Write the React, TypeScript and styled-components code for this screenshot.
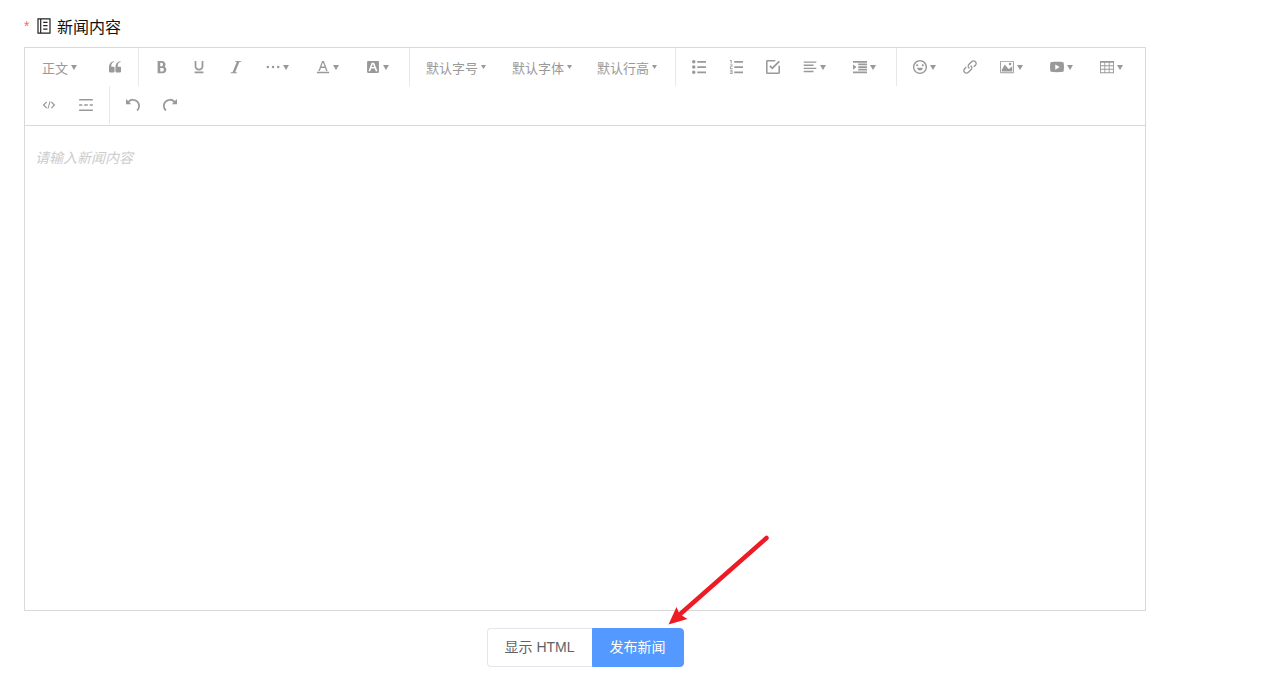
import React from "react";
import styled, { createGlobalStyle } from "styled-components";

const GlobalStyle = createGlobalStyle`
  * { box-sizing: border-box; }
  body {
    margin: 0;
    background: #fff;
    font-family: "Liberation Sans", "Noto Sans CJK SC", sans-serif;
    font-size: 14px;
  }
  button, textarea { font-family: inherit; margin: 0; }
`;

const Page = styled.main`
  padding: 12px 120px 24px 24px;
`;

const Label = styled.label`
  display: flex;
  align-items: center;
  height: 28px;
  margin-bottom: 7px;
  padding-bottom: 1px;
  font-size: 16px;
  color: #111;

  svg { margin: 0 5px 0 6px; }
`;

const Required = styled.span`
  width: 6px;
  font-size: 14px;
  color: #f56c6c;
`;

const Editor = styled.section`
  border: 1px solid #d9d9d9;
`;

const Toolbar = styled.div`
  display: flex;
  flex-wrap: wrap;
  padding: 0 4px 1px 5px;
  border-bottom: 1px solid #d9d9d9;
`;

const ToolButton = styled.button<{ $width: number; $gap: number }>`
  display: flex;
  align-items: center;
  gap: ${(p) => p.$gap}px;
  width: ${(p) => p.$width}px;
  height: 38px;
  padding: 0 0 0 12px;
  border: 0;
  background: none;
  color: #999;
  font-size: 13px;
  white-space: nowrap;
  cursor: pointer;
`;

const Separator = styled.span`
  width: 1px;
  height: 38px;
  margin: 0 4px 0 5px;
  background: #e8e8e8;
`;

const TextArea = styled.textarea`
  display: block;
  width: 100%;
  height: 484px;
  padding: 22px 10px;
  border: 0;
  outline: 0;
  resize: none;
  font-size: 14px;
  line-height: 20px;

  &::placeholder {
    color: #ccc;
    font-style: italic;
    opacity: 1;
  }
`;

const Footer = styled.footer`
  display: flex;
  justify-content: center;
  margin-top: 17px;
`;

const ButtonGroup = styled.div`
  position: relative;
  display: flex;
`;

const ActionButton = styled.button<{ $primary?: boolean }>`
  height: 39px;
  padding: 0 17px 3px;
  border: 1px solid ${(p) => (p.$primary ? "#5499ff" : "#e4e6ec")};
  border-right-width: ${(p) => (p.$primary ? 1 : 0)}px;
  border-radius: ${(p) => (p.$primary ? "0 4px 4px 0" : "4px 0 0 4px")};
  background: ${(p) => (p.$primary ? "#5499ff" : "#fff")};
  color: ${(p) => (p.$primary ? "#fff" : "#606266")};
  font-size: 14px;
  cursor: pointer;
`;

const Arrow = styled.svg`
  position: absolute;
  right: -88px;
  bottom: 100%;
  pointer-events: none;
`;

const paths = {
  quote:
    "M894.6 907.1H605.4c-32.6 0-59-26.4-59-59V608.2l-4-14.9c0-315.9 125.5-485.1 376.5-507.5v59.8C752.7 180.4 711.3 315.8 711.3 442.4v41.2l31.5 12.3h151.8c32.6 0 59 26.4 59 59v293.2c0 32.5-26.4 59-59 59z m-472 0H133.4c-32.6 0-59-26.4-59-59V608.2l-4-14.9c0-315.9 125.5-485.1 376.5-507.5v59.8C280.7 180.4 239.3 315.8 239.3 442.4v41.2l31.5 12.3h151.8c32.6 0 59 26.4 59 59v293.2c0 32.5-26.4 59-59 59z",
  bold: "M707.872 484.64A254.88 254.88 0 0 0 768 320c0-141.152-114.848-256-256-256H192v896h384c141.152 0 256-114.848 256-256a256.096 256.096 0 0 0-124.128-219.36zM384 192h101.504c55.968 0 101.504 57.408 101.504 128s-45.536 128-101.504 128H384V192z m159.008 640H384v-256h159.008c58.464 0 106.016 57.408 106.016 128s-47.552 128-106.016 128z",
  underline:
    "M704 64h128v416c0 159.072-143.264 288-320 288s-320-128.928-320-288V64h128v416c0 40.16 18.24 78.688 51.36 108.512 36.896 33.216 86.848 51.488 140.64 51.488s103.744-18.304 140.64-51.488c33.12-29.792 51.36-68.352 51.36-108.512zM192 832h640v128H192z",
  italic: "M896 64v64h-128L448 896h128v64H128v-64h128L576 128h-128V64z",
  more: "M40 512a92 92 0 1 0 184 0 92 92 0 1 0-184 0zM420 512a92 92 0 1 0 184 0 92 92 0 1 0-184 0zM800 512a92 92 0 1 0 184 0 92 92 0 1 0-184 0z",
  color:
    "M64 864h896v96H64zM360.58 576h302.85l81.53 224h102.16L579.24 64H444.77L176.89 800h102.16z m151.42-416 116.48 320H395.52z",
  background:
    "M510 315l84.700 197h-177.200l76.800-197zM945.230 157.500v709c0 43.300-35.400 78.700-78.700 78.700H157.500c-43.300 0-78.700-35.400-78.700-78.700V157.500c0-43.300 35.400-78.700 78.700-78.700h709c43.300 0 78.700 35.400 78.700 78.700z m-108.300 644L600.600 216.600c-5.900-11.800-15.700-19.700-29.500-19.700h-139.800c-11.800 0-23.600 7.900-27.600 19.700l-216.600 584.900c-3.900 11.800 3.900 25.600 17.700 25.600h80.700c11.800 0 23.600-9.800 27.600-21.700l63-175.200h263.900l68.900 175.200c3.900 11.800 15.700 21.700 29.500 21.700h80.700c13.800 0 23.600-13.800 17.700-25.600z",
  bullets:
    "M384 64h640v128H384V64z m0 384h640v128H384v-128z m0 384h640v128H384v-128zM0 128a128 128 0 1 1 256 0 128 128 0 0 1-256 0z m0 384a128 128 0 1 1 256 0 128 128 0 0 1-256 0z m0 384a128 128 0 1 1 256 0 128 128 0 0 1-256 0z",
  numbers:
    "M384 832h640v128H384z m0-384h640v128H384z m0-384h640v128H384zM192 0v256H128V64H64V0zM128 526.016v50.016h128v64H64v-146.016l128-60V384H64v-64h192v146.016zM256 704v320H64v-64h128v-64H64v-64h128v-64H64v-64z",
  todo: "M330 390l-90 90L460 700l560-560-90-90L460 520zM910 910H114V114h569V0H114C51 0 0 51 0 114v796c0 63 51 114 114 114h796c63 0 114-51 114-114V420H910z",
  align:
    "M768 793.600v102.400H51.200v-102.400h716.800z m204.800-230.400v102.400H51.200v-102.400h921.600z m-204.800-230.400v102.400H51.200v-102.400h716.800zM972.800 102.400v102.400H51.200V102.400h921.600z",
  indent:
    "M0 64h1024v128H0z m384 192h640v128H384z m0 192h640v128H384z m0 192h640v128H384zM0 832h1024v128H0z m0-128V320l256 192z",
  emotion:
    "M512 1024C230.400 1024 0 793.600 0 512S230.400 0 512 0s512 230.400 512 512-230.400 512-512 512z m0-102.400c226.700 0 409.600-182.900 409.600-409.600S738.700 102.400 512 102.400 102.400 285.300 102.400 512s182.900 409.600 409.600 409.600z m-204.800-358.400h409.600c0 113.400-91.400 204.800-204.800 204.800s-204.800-91.400-204.800-204.800z m0-102.400c-43.900 0-76.800-32.900-76.800-76.800s32.900-76.800 76.800-76.800 76.800 32.900 76.800 76.800-32.900 76.800-76.800 76.800z m409.600 0c-43.900 0-76.800-32.900-76.800-76.800s32.900-76.800 76.800-76.800 76.800 32.900 76.800 76.800-32.900 76.800-76.800 76.800z",
  link: "M440.224 635.776a51.84 51.84 0 0 1-36.768-15.232c-95.136-95.136-95.136-249.92 0-345.056l192-192C641.536 37.408 702.816 12.032 768 12.032s126.432 25.376 172.544 71.456c95.136 95.136 95.136 249.92 0 345.056l-87.776 87.776a51.968 51.968 0 1 1-73.536-73.536l87.776-87.776a140.16 140.16 0 0 0 0-197.984c-26.432-26.432-61.6-40.992-99.008-40.992s-72.544 14.56-99.008 40.992l-192 192a140.16 140.16 0 0 0 0 197.984 51.968 51.968 0 0 1-36.768 88.768zM256 1012a242.4 242.4 0 0 1-172.544-71.456c-95.136-95.136-95.136-249.92 0-345.056l87.776-87.776a51.968 51.968 0 1 1 73.536 73.536l-87.776 87.776a140.16 140.16 0 0 0 0 197.984c26.432 26.432 61.6 40.992 99.008 40.992s72.544-14.56 99.008-40.992l192-192a140.16 140.16 0 0 0 0-197.984 51.968 51.968 0 1 1 73.536-73.536c95.136 95.136 95.136 249.92 0 345.056l-192 192A242.4 242.4 0 0 1 256 1012z",
  image:
    "M960 128v768H64V128zM960 64H64C28.795 64 0 92.795 0 128v768c0 35.205 28.795 64 64 64h896c35.205 0 64-28.795 64-64V128c0-35.205-28.795-64-64-64zM832 288a96 96 0 1 1-192 0 96 96 0 0 1 192 0zM896 832H128V704l224-384 256 320h64l224-192z",
  video:
    "M981.184 160.096C837.568 139.456 678.848 128 512 128S186.432 139.456 42.816 160.096C15.296 267.808 0 386.848 0 512s15.264 244.16 42.816 351.904C186.464 884.544 345.152 896 512 896s325.568-11.456 469.184-32.096C1008.704 756.192 1024 637.152 1024 512s-15.264-244.16-42.816-351.904zM384 704V320l320 192-320 192z",
  table:
    "M0 64v896h1024V64H0z m384 576v-192h256v192H384z m256 64v192H384v-192h256z m0-512v192H384V192h256zM320 192v192H64V192h256z m0 256v192H64v-192h256z m384 0h256v192h-256v-192z m0-64V192h256v192h-256zM64 704h256v192H64v-192z m640 192v-192h256v192h-256z",
  code: "M310 250L50 512l260 262 66-66-194-196 194-196zM714 250l260 262-260 262-66-66 194-196-194-196zM556 230l72 20-160 544-72-20z",
  rule: "M10 80h1004v96H10zM10 848h1004v96H10zM10 464h230v96H10zM380 464h264v96H380zM784 464h230v96H784z",
  undo: "M512 64A510.272 510.272 0 0 0 149.984 213.984L0.032 64v384h384L240.512 304.48A382.784 382.784 0 0 1 512.032 192c212.064 0 384 171.936 384 384 0 114.688-50.304 217.632-130.016 288l84.672 96a510.72 510.72 0 0 0 173.344-384c0-282.784-229.216-512-512-512z",
  redo: "M0 576a510.72 510.72 0 0 0 173.344 384l84.672-96A383.136 383.136 0 0 1 128 576C128 363.936 299.936 192 512 192c106.048 0 202.048 42.976 271.52 112.48L640 448h384V64l-149.984 149.984A510.272 510.272 0 0 0 512 64C229.216 64 0 293.216 0 576z",
};

type IconName = keyof typeof paths;

type Item =
  | { kind: "icon"; icon: IconName; title: string; menu?: boolean }
  | { kind: "text"; text: string; title: string; width: number; small?: boolean }
  | { kind: "separator" };

const separator: Item = { kind: "separator" };

const items: Item[] = [
  { kind: "text", text: "正文", title: "标题", width: 66 },
  { kind: "icon", icon: "quote", title: "引用" },
  separator,
  { kind: "icon", icon: "bold", title: "粗体" },
  { kind: "icon", icon: "underline", title: "下划线" },
  { kind: "icon", icon: "italic", title: "斜体" },
  { kind: "icon", icon: "more", title: "更多", menu: true },
  { kind: "icon", icon: "color", title: "文字颜色", menu: true },
  { kind: "icon", icon: "background", title: "背景色", menu: true },
  separator,
  { kind: "text", text: "默认字号", title: "字号", width: 86, small: true },
  { kind: "text", text: "默认字体", title: "字体", width: 85, small: true },
  { kind: "text", text: "默认行高", title: "行高", width: 85, small: true },
  separator,
  { kind: "icon", icon: "bullets", title: "无序列表" },
  { kind: "icon", icon: "numbers", title: "有序列表" },
  { kind: "icon", icon: "todo", title: "待办" },
  { kind: "icon", icon: "align", title: "对齐", menu: true },
  { kind: "icon", icon: "indent", title: "缩进", menu: true },
  separator,
  { kind: "icon", icon: "emotion", title: "表情", menu: true },
  { kind: "icon", icon: "link", title: "链接" },
  { kind: "icon", icon: "image", title: "图片", menu: true },
  { kind: "icon", icon: "video", title: "视频", menu: true },
  { kind: "icon", icon: "table", title: "表格", menu: true },
  { kind: "icon", icon: "code", title: "代码" },
  { kind: "icon", icon: "rule", title: "分割线" },
  separator,
  { kind: "icon", icon: "undo", title: "撤销" },
  { kind: "icon", icon: "redo", title: "重做" },
];

const Icon = ({ name }: { name: IconName }) => (
  <svg width="14" height="14" viewBox="0 0 1024 1024" fill="currentColor" fillRule="evenodd" aria-hidden="true">
    <path d={paths[name]} />
  </svg>
);

const Caret = ({ small }: { small?: boolean }) => (
  <svg width={small ? 5 : 6} height={small ? 4 : 5} viewBox="0 0 6 5" preserveAspectRatio="none" fill="currentColor" aria-hidden="true">
    <path d="M0 0h6L3 5z" />
  </svg>
);

const Tool = ({ item }: { item: Item }) => {
  if (item.kind === "separator") return <Separator />;
  if (item.kind === "text") {
    return (
      <ToolButton type="button" title={item.title} $width={item.width} $gap={3}>
        {item.text}
        <Caret small={item.small} />
      </ToolButton>
    );
  }
  return (
    <ToolButton type="button" title={item.title} $width={item.menu ? 50 : 37} $gap={3}>
      <Icon name={item.icon} />
      {item.menu && <Caret />}
    </ToolButton>
  );
};

export default function App() {
  return (
    <>
      <GlobalStyle />
      <Page>
        <Label htmlFor="news-content">
          <Required>*</Required>
          <svg width="16" height="16" viewBox="0 0 16 16" fill="none" stroke="#222" strokeWidth="1.2" aria-hidden="true">
            <path d="M2 .8h12v14.400H2zM4.700 .8v14.400M7.200 4.300h4.300M7.200 7.700h4.300M7.200 11.100h4.300" />
          </svg>
          新闻内容
        </Label>
        <Editor>
          <Toolbar role="toolbar">
            {items.map((item, i) => (
              <Tool key={i} item={item} />
            ))}
          </Toolbar>
          <TextArea id="news-content" placeholder="请输入新闻内容" />
        </Editor>
        <Footer>
          <ButtonGroup>
            <ActionButton type="button">显示 HTML</ActionButton>
            <ActionButton type="button" $primary>
              发布新闻
            </ActionButton>
            <Arrow width="112" height="96" viewBox="0 0 112 96" aria-hidden="true">
              <path d="M106.500 6L18 84" stroke="#ed1c24" strokeWidth="4.500" strokeLinecap="round" />
              <path d="M8.500 92.500L16.500 75L19.500 82L27.500 87z" fill="#ed1c24" />
            </Arrow>
          </ButtonGroup>
        </Footer>
      </Page>
    </>
  );
}
